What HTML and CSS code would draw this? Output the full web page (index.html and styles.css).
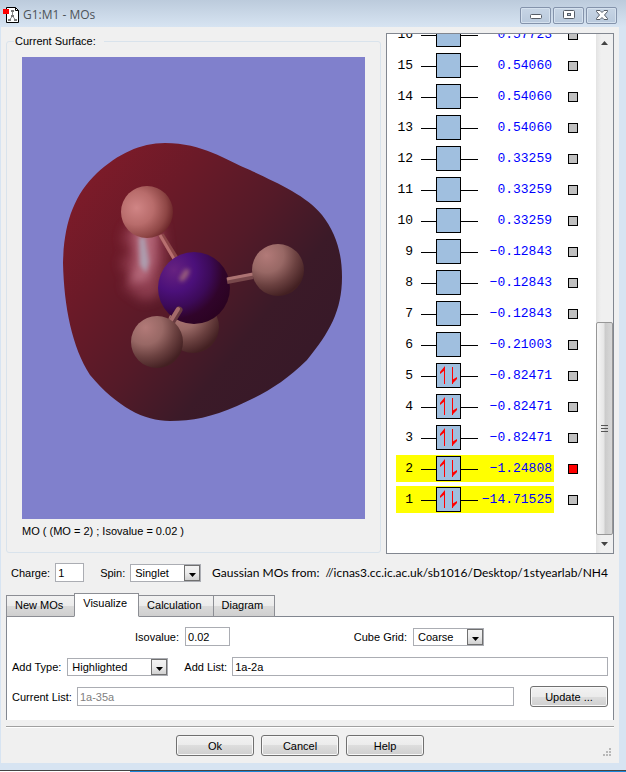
FILE: index.html
```html
<!DOCTYPE html>
<html lang="en">
<head>
<meta charset="utf-8">
<title>G1:M1 - MOs</title>
<link rel="stylesheet" href="styles.css">
</head>
<body>
<div class="window">
  <header class="titlebar">
    <svg class="app-icon" width="17" height="18" viewBox="0 0 17 18" aria-hidden="true">
      <path d="M3.500 1.500h9l3 3v12h-12z" fill="#fff" stroke="#000"/>
      <path d="M12.500 1.500v3h3" fill="none" stroke="#000"/>
      <path d="M9.500 5v5M9.500 10l-3 4M9.500 10l3 4" stroke="#888" stroke-width="1" fill="none"/>
      <path d="M8 4h3v2h-3zM8 9h3v2h-3zM5 13h3v2h-3zM11 13h3v2h-3z" fill="#777"/>
      <path d="M0 3h6v5h-6z" fill="#f00"/>
    </svg>
    <h1 class="title">G1:M1 - MOs</h1>
    <div class="controls">
      <button class="control" type="button" aria-label="Minimize"><svg width="12" height="10" viewBox="0 0 12 10"><rect x=".5" y="4.500" width="11" height="4" rx="1" fill="#fff" stroke="#555c66"/></svg></button>
      <button class="control" type="button" aria-label="Maximize"><svg width="12" height="10" viewBox="0 0 12 10"><rect x=".5" y=".5" width="11" height="8" rx="1" fill="#fff" stroke="#555c66"/><rect x="4.500" y="3.500" width="3" height="2" fill="#b9c8da" stroke="#555c66"/></svg></button>
      <button class="control" type="button" aria-label="Close"><svg width="12" height="10" viewBox="0 0 12 10"><path d="M.5 .5h3.500l2 2 2-2h3.500v1l-3 3.500 3 3.500v1h-3.500l-2-2-2 2h-3.500v-1l3-3.500-3-3.500z" fill="#fff" stroke="#555c66"/></svg></button>
    </div>
  </header>

  <main class="client">
    <div class="top">
      <fieldset class="surface">
        <legend>Current Surface:</legend>
        <svg class="scene" viewBox="0 0 343 462" role="img" aria-label="Molecular orbital surface">
          <defs>
            <linearGradient id="cloud" gradientUnits="userSpaceOnUse" x1="65" y1="125" x2="280" y2="300">
              <stop offset="0" stop-color="#7c1b29"/>
              <stop offset=".25" stop-color="#6b1a28"/>
              <stop offset=".55" stop-color="#541a28"/>
              <stop offset=".8" stop-color="#3b1a28"/>
              <stop offset="1" stop-color="#381928"/>
            </linearGradient>
            <radialGradient id="near" cx=".3" cy=".42" r=".72">
              <stop offset="0" stop-color="#d08585"/>
              <stop offset=".45" stop-color="#b86c6b"/>
              <stop offset=".8" stop-color="#8e4645"/>
              <stop offset="1" stop-color="#6a2528"/>
            </radialGradient>
            <radialGradient id="far" cx=".28" cy=".22" r=".82">
              <stop offset="0" stop-color="#b27a78"/>
              <stop offset=".4" stop-color="#986865"/>
              <stop offset=".7" stop-color="#6b4140"/>
              <stop offset="1" stop-color="#432022"/>
            </radialGradient>
            <radialGradient id="core" cx=".22" cy=".25" r=".85">
              <stop offset="0" stop-color="#672280"/>
              <stop offset=".35" stop-color="#4b107a"/>
              <stop offset=".6" stop-color="#3c0a58"/>
              <stop offset=".8" stop-color="#30042a"/>
              <stop offset="1" stop-color="#2b0322"/>
            </radialGradient>
            <filter id="soft" x="-50%" y="-50%" width="200%" height="200%"><feGaussianBlur stdDeviation="6"/></filter>
            <filter id="mid" x="-80%" y="-80%" width="260%" height="260%"><feGaussianBlur stdDeviation="4"/></filter>
            <filter id="glint" x="-80%" y="-80%" width="260%" height="260%"><feGaussianBlur stdDeviation="2"/></filter>
          </defs>
          <rect width="343" height="462" fill="#8080cc"/>
          <path d="M143 86C181 86 203 103 228 113C255 126 284 138 300 158C314 176 320 196 320 220C320 254 307 276 285 303C262 326 240 338 215 349C190 360 170 364 148 364C122 364 95 350 68 318C50 290 42 250 41 206C42 166 52 138 75 116C96 97 118 86 143 86Z" fill="url(#cloud)"/>
          <path d="M106 168L140 166L144 200L138 238L122 244L102 230L108 220L98 206L110 194L100 184Z" fill="#a55064" opacity=".65" filter="url(#soft)"/>
          <path d="M112 172L134 172L133 205L126 224L108 226L114 205Z" fill="#c07486" opacity=".75" filter="url(#mid)"/>
          <path d="M117 180L123 180L127 205L124 216L118 208Z" fill="#ad9cae" filter="url(#glint)"/>
          <circle cx="125" cy="155" r="26" fill="url(#near)"/>
          <path d="M139 178L154 202" stroke="#8b4648" stroke-width="6"/>
          <path d="M138 178L152 202" stroke="#b87070" stroke-width="3"/>
          <circle cx="171" cy="270" r="26" fill="url(#far)"/>
          <circle cx="172" cy="231" r="36" fill="url(#core)"/>
          <path d="M157 222L163 212L168 213L165 220L160 225Z" fill="#9b607c" filter="url(#glint)"/>
          <path d="M205 224L231 219" stroke="#78484b" stroke-width="6"/>
          <path d="M205 222L231 217" stroke="#ad7473" stroke-width="3"/>
          <circle cx="256" cy="213" r="26" fill="url(#far)"/>
          <path d="M157 253L149 266" stroke="#683a40" stroke-width="7" stroke-linecap="round"/>
          <path d="M156 252L148 265" stroke="#a56b6b" stroke-width="4" stroke-linecap="round"/>
          <circle cx="135" cy="285" r="26" fill="url(#far)"/>
        </svg>
        <p class="caption">MO ( (MO = 2) ; Isovalue = 0.02 )</p>
      </fieldset>

      <section class="orbitals" aria-label="Orbitals">
        <svg width="0" height="0" class="defs" aria-hidden="true">
          <symbol id="empty" viewBox="0 0 57 27">
            <path d="M0 14.500h57" stroke="#000"/>
            <rect x="15.500" y="1.500" width="24" height="24" fill="#a0bfdf" stroke="#000"/>
          </symbol>
          <symbol id="paired" viewBox="0 0 57 27">
            <path d="M0 14.500h57" stroke="#000"/>
            <rect x="15.500" y="1.500" width="24" height="24" fill="#a0bfdf" stroke="#000"/>
            <path d="M23 5h1v17h-1zM31 5h1v17h-1z" fill="#f00"/>
            <path d="M24 4v4l-5 4v-2zM31 22v-4l5-3v2z" fill="#f00"/>
          </symbol>
        </svg>
        <div class="list">
          <table>
            <tbody>
              <tr><th>16</th><td><svg class="level"><use href="#empty"/></svg></td><td class="energy">0.57723</td><td class="pick"><button type="button" class="swatch" aria-label="Surface 16"></button></td></tr>
              <tr><th>15</th><td><svg class="level"><use href="#empty"/></svg></td><td class="energy">0.54060</td><td class="pick"><button type="button" class="swatch" aria-label="Surface 15"></button></td></tr>
              <tr><th>14</th><td><svg class="level"><use href="#empty"/></svg></td><td class="energy">0.54060</td><td class="pick"><button type="button" class="swatch" aria-label="Surface 14"></button></td></tr>
              <tr><th>13</th><td><svg class="level"><use href="#empty"/></svg></td><td class="energy">0.54060</td><td class="pick"><button type="button" class="swatch" aria-label="Surface 13"></button></td></tr>
              <tr><th>12</th><td><svg class="level"><use href="#empty"/></svg></td><td class="energy">0.33259</td><td class="pick"><button type="button" class="swatch" aria-label="Surface 12"></button></td></tr>
              <tr><th>11</th><td><svg class="level"><use href="#empty"/></svg></td><td class="energy">0.33259</td><td class="pick"><button type="button" class="swatch" aria-label="Surface 11"></button></td></tr>
              <tr><th>10</th><td><svg class="level"><use href="#empty"/></svg></td><td class="energy">0.33259</td><td class="pick"><button type="button" class="swatch" aria-label="Surface 10"></button></td></tr>
              <tr><th>9</th><td><svg class="level"><use href="#empty"/></svg></td><td class="energy">−0.12843</td><td class="pick"><button type="button" class="swatch" aria-label="Surface 9"></button></td></tr>
              <tr><th>8</th><td><svg class="level"><use href="#empty"/></svg></td><td class="energy">−0.12843</td><td class="pick"><button type="button" class="swatch" aria-label="Surface 8"></button></td></tr>
              <tr><th>7</th><td><svg class="level"><use href="#empty"/></svg></td><td class="energy">−0.12843</td><td class="pick"><button type="button" class="swatch" aria-label="Surface 7"></button></td></tr>
              <tr><th>6</th><td><svg class="level"><use href="#empty"/></svg></td><td class="energy">−0.21003</td><td class="pick"><button type="button" class="swatch" aria-label="Surface 6"></button></td></tr>
              <tr><th>5</th><td><svg class="level"><use href="#paired"/></svg></td><td class="energy">−0.82471</td><td class="pick"><button type="button" class="swatch" aria-label="Surface 5"></button></td></tr>
              <tr><th>4</th><td><svg class="level"><use href="#paired"/></svg></td><td class="energy">−0.82471</td><td class="pick"><button type="button" class="swatch" aria-label="Surface 4"></button></td></tr>
              <tr><th>3</th><td><svg class="level"><use href="#paired"/></svg></td><td class="energy">−0.82471</td><td class="pick"><button type="button" class="swatch" aria-label="Surface 3"></button></td></tr>
              <tr class="marked"><th>2</th><td><svg class="level"><use href="#paired"/></svg></td><td class="energy">−1.24808</td><td class="pick"><button type="button" class="swatch current" aria-label="Surface 2"></button></td></tr>
              <tr class="marked"><th>1</th><td><svg class="level"><use href="#paired"/></svg></td><td class="energy">−14.71525</td><td class="pick"><button type="button" class="swatch" aria-label="Surface 1"></button></td></tr>
            </tbody>
          </table>
        </div>
        <div class="scrollbar">
          <button type="button" class="arrow" aria-label="Scroll up"><svg width="7" height="4" viewBox="0 0 7 4"><path d="M0 4L3.500 0L7 4z" fill="#444"/></svg></button>
          <div class="track"></div>
          <div class="thumb"><svg width="7" height="9" viewBox="0 0 7 9"><path d="M0 1.500h7M0 4.500h7M0 7.500h7" stroke="#555"/></svg></div>
          <button type="button" class="arrow" aria-label="Scroll down"><svg width="7" height="4" viewBox="0 0 7 4"><path d="M0 0h7L3.500 4z" fill="#444"/></svg></button>
        </div>
      </section>
    </div>

    <div class="job">
      <label for="charge">Charge:</label>
      <input id="charge" class="field charge" type="text" value="1">
      <label for="spin" class="spin-label">Spin:</label>
      <span class="combo spin"><select id="spin"><option>Singlet</option></select><svg class="caret" viewBox="0 0 16 16" aria-hidden="true"><use href="#caret"/></svg></span>
      <p class="source"><span>Gaussian MOs from:</span><span>//icnas3.cc.ic.ac.uk/sb1016/Desktop/1styearlab/NH4</span></p>
    </div>

    <div class="tabs" role="tablist">
      <button type="button" role="tab" class="tab">New MOs</button>
      <button type="button" role="tab" class="tab active" aria-selected="true">Visualize</button>
      <button type="button" role="tab" class="tab">Calculation</button>
      <button type="button" role="tab" class="tab">Diagram</button>
    </div>
    <section class="panel" role="tabpanel">
      <div class="row split">
        <div class="pair">
          <label for="iso">Isovalue:</label>
          <input id="iso" class="field iso" type="text" value="0.02">
        </div>
        <div class="pair">
          <label for="grid">Cube Grid:</label>
          <span class="combo grid"><select id="grid"><option>Coarse</option></select><svg class="caret" viewBox="0 0 16 16" aria-hidden="true"><use href="#caret"/></svg></span>
        </div>
      </div>
      <div class="row">
        <label for="type">Add Type:</label>
        <span class="combo type"><select id="type"><option>Highlighted</option></select><svg class="caret" viewBox="0 0 16 16" aria-hidden="true"><use href="#caret"/></svg></span>
        <label for="add" class="add-label">Add List:</label>
        <input id="add" class="field wide" type="text" value="1a-2a">
      </div>
      <div class="row">
        <label for="current">Current List:</label>
        <input id="current" class="field wide" type="text" value="1a-35a" disabled>
        <button type="button" class="push update">Update ...</button>
      </div>
    </section>

    <footer class="actions">
      <button type="button" class="push">Ok</button>
      <button type="button" class="push">Cancel</button>
      <button type="button" class="push">Help</button>
      <svg class="grip" width="8" height="8" viewBox="0 0 8 8" aria-hidden="true"><path d="M6 0h2v2h-2zM3 3h2v2h-2zM6 3h2v2h-2zM0 6h2v2h-2zM3 6h2v2h-2zM6 6h2v2h-2z" fill="#b8b8b8"/></svg>
    </footer>
  </main>
</div>
<svg width="0" height="0" class="defs" aria-hidden="true">
  <linearGradient id="face" x2="0" y2="1"><stop offset="0" stop-color="#f4f4f4"/><stop offset=".5" stop-color="#ebebeb"/><stop offset="1" stop-color="#cfcfcf"/></linearGradient>
  <symbol id="caret" viewBox="0 0 16 16">
    <rect x=".5" y=".5" width="15" height="15" fill="url(#face)" stroke="#707070"/>
    <path d="M5 8h7L8.500 12z" fill="#000"/>
  </symbol>
</svg>
</body>
</html>
```

FILE: styles.css
```css
* {
  box-sizing: border-box;
}

body {
  margin: 0;
  min-height: 100vh;
  background: linear-gradient(90deg, #fff 130px, #1a86d8 130px);
  color: #000;
  font: 11px/16px "Liberation Sans", Arial, sans-serif;
}

button,
input,
select {
  margin: 0;
  color: inherit;
  font: inherit;
}

p,
h1 {
  margin: 0;
}

.defs {
  position: absolute;
}

.window {
  padding: 0 7px 7px 1px;
  border-bottom: 1px solid #444;
  background: linear-gradient(#bccbdc, #d7e4f2 27px);
}

.titlebar {
  display: flex;
  align-items: center;
  height: 27px;
  padding: 3px 2px 0;
}

.title {
  flex: 1;
  padding-left: 3px;
  color: #4d5358;
  font: 12px/16px "Open Sans", sans-serif;
}

.controls {
  display: flex;
  gap: 2px;
}

.control {
  display: grid;
  place-items: center;
  width: 31px;
  height: 17px;
  padding: 0;
  border: 1px solid #8493ab;
  border-radius: 2px;
  background: linear-gradient(#c7d5e5, #b9c9dc);
  box-shadow: inset 0 0 0 1px #d5e1ee;
}

.client {
  padding: 6px 5px 7px;
  background: #f0f0f0;
}

.top {
  display: grid;
  grid-template-columns: 1fr 228px;
  gap: 5px;
}

.surface {
  min-width: 0;
  margin: 0 0 1px;
  padding: 8px 15px 13px;
  border: 1px solid #d9e3ec;
  border-radius: 3px;
}

.surface legend {
  margin-left: -8px;
  padding: 0 8px 0 1px;
}

.scene {
  display: block;
  width: 100%;
}

.caption {
  padding-top: 4px;
}

.orbitals {
  display: flex;
  min-width: 0;
  border: 1px solid #828790;
  background: #fff;
}

.list {
  display: flex;
  flex: 1;
  flex-direction: column;
  justify-content: flex-end;
  contain: size;
  overflow: hidden;
  padding: 0 0 36px 9px;
}

.list table {
  border-spacing: 0 4px;
  width: 182px;
  font: 13px/27px "Liberation Mono", monospace;
}

.list th,
.list td {
  height: 27px;
  padding: 0;
  font-weight: 400;
  text-align: right;
}

.list th {
  width: 25px;
  padding-right: 8px;
}

.list .energy {
  padding-right: 2px;
  color: #00f;
}

.list .pick {
  width: 24px;
}

.marked th,
.marked td:not(.pick) {
  background: #ff0;
}

.level {
  display: block;
  width: 57px;
  height: 27px;
}

.swatch {
  display: block;
  width: 10px;
  height: 10px;
  margin-left: auto;
  padding: 0;
  border: 1px solid #000;
  background: #c0c0c0;
}

.swatch.current {
  background: #f00;
}

.scrollbar {
  display: flex;
  flex-direction: column;
  width: 17px;
  background: linear-gradient(90deg, #e3e3e3, #f0f0f0 30%);
}

.arrow {
  display: grid;
  place-items: center;
  height: 18px;
  padding: 0;
  border: 0;
  background: none;
}

.track {
  flex: 271;
}

.thumb {
  display: grid;
  flex: 212;
  place-items: center;
  border: 1px solid #979797;
  border-radius: 2px;
  background: linear-gradient(90deg, #f5f5f5, #e6e6e6 45%, #cbcbcb 55%, #d8d8d8);
}

.job {
  display: flex;
  align-items: center;
  padding: 9px 6px 10px 5px;
}

.field {
  min-width: 0;
  height: 19px;
  padding: 0 2px;
  border: 1px solid #abadb3;
  background: #fff;
}

.field:disabled {
  color: #808080;
}

.charge {
  width: 29px;
  margin-left: 5px;
}

.spin-label {
  margin-left: 16px;
}

.combo {
  display: flex;
  position: relative;
  height: 18px;
}

.combo select {
  width: 100%;
  padding: 0 18px 2px 4px;
  appearance: none;
  border: 1px solid #abadb3;
  border-radius: 0;
  background: #fff;
}

.caret {
  position: absolute;
  top: 1px;
  right: 1px;
  width: 16px;
  height: 16px;
  pointer-events: none;
}

.spin {
  width: 71px;
  margin-left: 5px;
}

.source {
  display: flex;
  flex: 1;
  justify-content: flex-end;
  gap: 6px;
  white-space: nowrap;
  font: 12px/16px Lato, sans-serif;
}

.tabs {
  display: flex;
  align-items: flex-end;
  margin-bottom: -1px;
  padding-top: 1px;
}

.tab {
  height: 22px;
  padding: 0 11px 2px 8px;
  border: 1px solid #8c8e94;
  background: linear-gradient(#f2f2f2, #ebebeb 50%, #dadada 50%, #cfcfcf);
}

.tab + .tab {
  margin-left: -1px;
}

.tab.active {
  position: relative;
  height: 24px;
  padding-bottom: 4px;
  border-bottom-color: #fff;
  background: #fff;
}

.panel {
  display: flex;
  flex-direction: column;
  gap: 9px;
  padding: 9px 5px 13px;
  border: solid #828790;
  border-width: 1px 1px 0;
  background: #fff;
}

.row {
  display: flex;
  align-items: center;
  min-height: 21px;
}

.pair {
  display: flex;
  align-items: center;
  gap: 6px;
}

.split {
  justify-content: space-between;
  padding: 0 124px 0 123px;
}

.iso {
  width: 45px;
}

.grid {
  width: 71px;
}

.type {
  width: 101px;
  margin-left: 6px;
}

.add-label {
  margin-left: 16px;
}

.wide {
  flex: 1;
  margin-left: 5px;
}

.push {
  width: 78px;
  height: 21px;
  padding: 0;
  border: 1px solid #707070;
  border-radius: 3px;
  background: linear-gradient(#f2f2f2, #ebebeb 50%, #dddddd 50%, #cfcfcf);
  box-shadow: inset 0 0 0 1px #f8f8f8;
}

.update {
  margin-left: 16px;
}

.actions {
  display: flex;
  position: relative;
  justify-content: center;
  gap: 7px;
  margin-top: 6px;
  padding: 8px 20px 0 0;
  border-top: 1px solid #a0a0a0;
  box-shadow: inset 0 1px #fff;
}

.grip {
  position: absolute;
  right: 3px;
  bottom: 0;
}
```
